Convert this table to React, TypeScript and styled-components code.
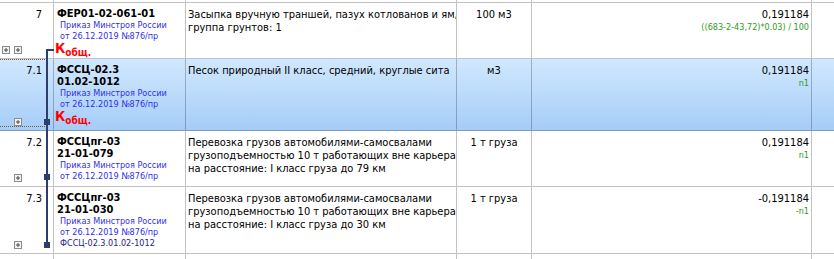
import React from "react";
import styled, { createGlobalStyle, css } from "styled-components";

const GlobalStyle = createGlobalStyle`
  html, body {
    margin: 0;
    padding: 0;
    background: #fff;
  }
  body {
    width: 834px;
    height: 259px;
    overflow: hidden;
    font-family: "DejaVu Sans Condensed", "DejaVu Sans", sans-serif;
    color: #000;
  }
`;

const COLS = "54px 132px 271px 75px 280px 1fr";
const GRID_LINE = "rgba(0, 0, 0, 0.24)";

const Table = styled.div`
  position: relative;
  width: 834px;
  height: 259px;
  overflow: hidden;
`;

const Row = styled.div<{ $h: number; $selected?: boolean }>`
  display: grid;
  grid-template-columns: ${COLS};
  height: ${(p) => p.$h}px;
  ${(p) =>
    p.$selected &&
    css`
      background: linear-gradient(#d1e8fe, #a5ccf7);
    `}
`;

const Cell = styled.div`
  box-sizing: border-box;
  min-width: 0;
  overflow: hidden;
  border-right: 1px solid ${GRID_LINE};
  border-bottom: 1px solid ${GRID_LINE};
  white-space: nowrap;
  &:last-child {
    border-right: none;
  }
`;

const NumCell = styled(Cell)<{ $focused?: boolean }>`
  position: relative;
  display: flex;
  flex-direction: column;
  justify-content: space-between;
  align-items: flex-end;
  padding: 5px 11px 4px 2px;
  font-size: 11px;
  line-height: 13px;
  ${(p) =>
    p.$focused &&
    css`
      &::after {
        content: "";
        position: absolute;
        left: 0;
        top: 0;
        right: 6px;
        bottom: 3px;
        border: 1px dotted #6b5a3a;
        border-left: none;
        pointer-events: none;
      }
    `}
`;

const Expanders = styled.div`
  align-self: flex-start;
  width: 20px;
  display: flex;
  justify-content: flex-end;
  gap: 4px;
`;

const CodeCell = styled(Cell)`
  padding: 5px 2px 0 3px;
`;

const Code = styled.div`
  font-weight: bold;
  font-size: 11px;
  line-height: 12px;
`;

const Ref = styled.div<{ $dark?: boolean }>`
  padding-left: 3px;
  font-size: 9px;
  line-height: 11px;
  color: ${(p) => (p.$dark ? "#1e1e86" : "#2f2fee")};
`;

const Koef = styled.div`
  margin-left: -2px;
  color: #ff0000;
  font-weight: bold;
  font-size: 14px;
  line-height: 12px;
  & > sub {
    font-size: 10px;
    vertical-align: -3px;
    line-height: 0;
  }
`;

const TextCell = styled(Cell)<{ $align?: "left" | "center" | "right" }>`
  padding: 5px 2px 0 2px;
  font-size: 11px;
  line-height: 13px;
  text-align: ${(p) => p.$align ?? "left"};
`;

const Formula = styled.div`
  font-size: 9px;
  line-height: 12px;
  color: #2f9a22;
`;

const BracketLayer = styled.svg`
  position: absolute;
  left: 0;
  top: 0;
  pointer-events: none;
`;

const PlusBox = () => (
  <svg width="8" height="8" viewBox="0 0 8 8">
    <rect x="0.5" y="0.5" width="7" height="7" fill="#f2f2f2" stroke="#8c8c8c" />
    <path d="M2 4h4M4 2v4" stroke="#4a4a4a" strokeWidth="1" />
  </svg>
);

type Item = {
  num: string;
  height: number;
  code: string[];
  refs: { text: string; dark?: boolean }[];
  koef?: boolean;
  name: string[];
  unit: string;
  value: string;
  formula: string;
  boxes: number;
  selected?: boolean;
};

const REF1 = "Приказ Минстроя России";
const REF2 = "от 26.12.2019 №876/пр";

const items: Item[] = [
  {
    num: "7",
    height: 56,
    code: ["ФЕР01-02-061-01"],
    refs: [{ text: REF1 }, { text: REF2 }],
    koef: true,
    name: ["Засыпка вручную траншей, пазух котлованов и ям,", "группа грунтов: 1"],
    unit: "100 м3",
    value: "0,191184",
    formula: "((683-2-43,72)*0.03) / 100",
    boxes: 2,
  },
  {
    num: "7.1",
    height: 72,
    code: ["ФССЦ-02.3", "01.02-1012"],
    refs: [{ text: REF1 }, { text: REF2 }],
    koef: true,
    name: ["Песок природный II класс, средний, круглые сита"],
    unit: "м3",
    value: "0,191184",
    formula: "n1",
    boxes: 1,
    selected: true,
  },
  {
    num: "7.2",
    height: 56,
    code: ["ФССЦпг-03", "21-01-079"],
    refs: [{ text: REF1 }, { text: REF2 }],
    name: [
      "Перевозка грузов автомобилями-самосвалами",
      "грузоподъемностью 10 т работающих вне карьера",
      "на расстояние: I класс груза до 79 км",
    ],
    unit: "1 т груза",
    value: "0,191184",
    formula: "n1",
    boxes: 1,
  },
  {
    num: "7.3",
    height: 67,
    code: ["ФССЦпг-03", "21-01-030"],
    refs: [{ text: REF1 }, { text: REF2 }, { text: "ФССЦ-02.3.01.02-1012", dark: true }],
    name: [
      "Перевозка грузов автомобилями-самосвалами",
      "грузоподъемностью 10 т работающих вне карьера",
      "на расстояние: I класс груза до 30 км",
    ],
    unit: "1 т груза",
    value: "-0,191184",
    formula: "-n1",
    boxes: 1,
  },
];

const EmptyRow = ({ h }: { h: number }) => (
  <Row $h={h}>
    <Cell />
    <Cell />
    <Cell />
    <Cell />
    <Cell />
    <Cell />
  </Row>
);

export default function App() {
  return (
    <>
      <GlobalStyle />
      <Table>
        <EmptyRow h={3} />
        {items.map((it) => (
          <Row key={it.num} $h={it.height} $selected={it.selected}>
            <NumCell $focused={it.selected}>
              <span>{it.num}</span>
              <Expanders>
                {Array.from({ length: it.boxes }).map((_, i) => (
                  <PlusBox key={i} />
                ))}
              </Expanders>
            </NumCell>
            <CodeCell>
              {it.code.map((c) => (
                <Code key={c}>{c}</Code>
              ))}
              {it.refs.map((r) => (
                <Ref key={r.text} $dark={r.dark}>
                  {r.text}
                </Ref>
              ))}
              {it.koef && (
                <Koef>
                  К<sub>общ.</sub>
                </Koef>
              )}
            </CodeCell>
            <TextCell>
              {it.name.map((n) => (
                <div key={n}>{n}</div>
              ))}
            </TextCell>
            <TextCell $align="center">{it.unit}</TextCell>
            <TextCell $align="right">
              <div>{it.value}</div>
              <Formula>{it.formula}</Formula>
            </TextCell>
            <Cell />
          </Row>
        ))}
        <EmptyRow h={10} />
        <BracketLayer width="60" height="259" viewBox="0 0 60 259">
          <g fill="#2b3e6c">
            <rect x="46" y="49" width="8" height="2" />
            <rect x="46" y="49" width="2" height="199" />
            <rect x="44" y="119" width="6" height="6" />
            <rect x="44" y="174" width="6" height="6" />
            <rect x="44" y="242" width="6" height="6" />
          </g>
        </BracketLayer>
      </Table>
    </>
  );
}
